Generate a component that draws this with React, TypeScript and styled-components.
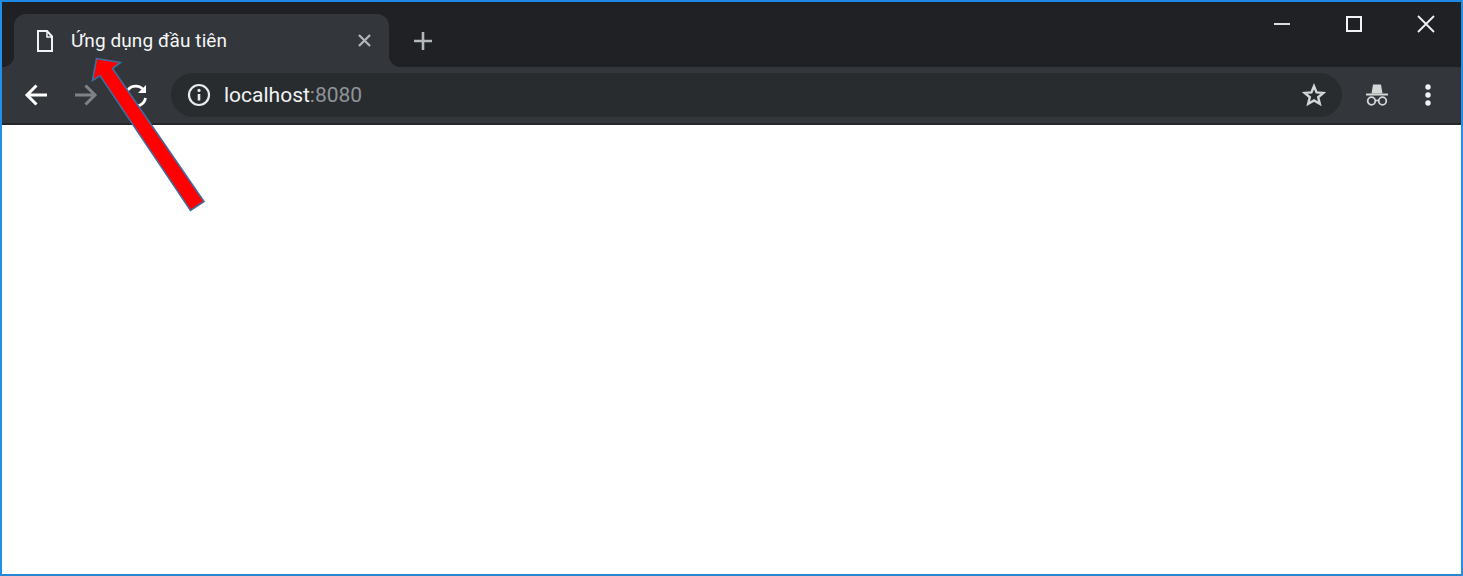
import styled, { createGlobalStyle } from 'styled-components';

const Global = createGlobalStyle`
  html, body {
    margin: 0;
    padding: 0;
    background: #fff;
  }
`;

const Frame = styled.div`
  position: relative;
  box-sizing: border-box;
  width: 1463px;
  height: 576px;
  border: 2px solid #2090ec;
  border-top-color: #1e88e5;
  border-bottom-color: #2a86d0;
  background: #fff;
  overflow: hidden;
  font-family: Roboto, 'Liberation Sans', sans-serif;
`;

const TabStrip = styled.div`
  display: flex;
  align-items: flex-end;
  height: 65px;
  padding-left: 12px;
  background: #1f2125;
`;

const Tab = styled.div`
  position: relative;
  box-sizing: border-box;
  display: flex;
  align-items: center;
  width: 375px;
  height: 53px;
  padding: 0 18px 0 21px;
  border-radius: 12px 12px 0 0;
  background: #33363a;
  color: #f6f7f8;

  &::before,
  &::after {
    content: '';
    position: absolute;
    bottom: 0;
    width: 12px;
    height: 12px;
  }

  &::before {
    left: -12px;
    background: radial-gradient(circle at 0 0, #1f2125 12px, #33363a 12.5px);
  }

  &::after {
    right: -12px;
    background: radial-gradient(circle at 100% 0, #1f2125 12px, #33363a 12.5px);
  }
`;

const TabTitle = styled.span`
  flex: 1;
  margin-left: 16px;
  margin-top: -1px;
  font-size: 19px;
  letter-spacing: 0.1px;
  white-space: nowrap;
`;

const NewTab = styled.div`
  display: flex;
  align-items: center;
  justify-content: center;
  width: 24px;
  height: 24px;
  margin: 0 0 14px 22px;
  color: #b4b7ba;
`;

const WindowControls = styled.div`
  display: flex;
  align-self: flex-start;
  gap: 54px;
  margin-left: auto;
  margin-right: 26px;
  padding-top: 11px;
`;

const Toolbar = styled.div`
  box-sizing: border-box;
  display: flex;
  align-items: center;
  height: 58px;
  padding: 0 20px;
  border-bottom: 2px solid #26272a;
  background: #33363a;
`;

const NavButton = styled.div<{ $dim?: boolean }>`
  display: flex;
  align-items: center;
  justify-content: center;
  width: 28px;
  height: 28px;
  margin-right: 22px;
  color: ${(p) => (p.$dim ? '#808285' : '#fff')};
`;

const Omnibox = styled.div`
  display: flex;
  flex: 1;
  align-items: center;
  height: 44px;
  margin-left: -1px;
  padding: 0 15px 0 16px;
  border-radius: 22px;
  background: #292c2f;
`;

const Url = styled.span`
  margin-left: 13px;
  font-size: 21px;
  color: #f1f3f4;
`;

const Port = styled.span`
  color: #8f9498;
`;

const ActionSlot = styled.div`
  display: flex;
  align-items: center;
  justify-content: center;
  width: 26px;
  height: 26px;
  color: #d4d6d8;
`;

const StarSlot = styled(ActionSlot)`
  margin-left: auto;
`;

const ToolbarActions = styled.div`
  display: flex;
  align-items: center;
  gap: 25px;
  margin-left: 22px;
`;

const Pointer = styled.svg`
  position: absolute;
  left: -2px;
  top: -2px;
  pointer-events: none;
`;

const Page = () => (
  <svg width="20" height="24" viewBox="0 0 20 24" fill="none" stroke="#f1f3f4" strokeWidth="2">
    <path d="M3 2h9l5 5.500V22H3z" />
    <path d="M12 2v6h5" strokeWidth="1.500" />
  </svg>
);

const CloseSmall = () => (
  <svg width="13" height="13" viewBox="0 0 14 14" stroke="#b4b7ba" strokeWidth="2.400" style={{ flexShrink: 0 }}>
    <path d="M1 1l12 12M13 1L1 13" />
  </svg>
);

const Plus = () => (
  <svg width="20" height="20" viewBox="0 0 20 20" stroke="currentColor" strokeWidth="2.600">
    <path d="M10 1v18M1 10h18" />
  </svg>
);

const Back = () => (
  <svg width="24" height="24" viewBox="0 0 24 24" fill="none" stroke="currentColor" strokeWidth="3">
    <path d="M23 12H3.500M12.500 2.500L3 12l9.500 9.500" />
  </svg>
);

const Forward = () => (
  <svg width="24" height="24" viewBox="0 0 24 24" fill="none" stroke="currentColor" strokeWidth="3">
    <path d="M1 12h19.500M11.500 2.500L21 12l-9.500 9.500" />
  </svg>
);

const Reload = () => (
  <svg width="24" height="24" viewBox="0 0 24 24" fill="none">
    <path d="M19.500 7A10 10 0 1 0 21.500 15" stroke="#fff" strokeWidth="2.800" />
    <path d="M22 2v8h-8z" fill="#fff" />
  </svg>
);

const Info = () => (
  <svg width="24" height="24" viewBox="0 0 24 24" fill="none">
    <circle cx="12" cy="12" r="10" stroke="#e8eaed" strokeWidth="2.200" />
    <path d="M12 11v6.500" stroke="#e8eaed" strokeWidth="2.600" />
    <circle cx="12" cy="7.400" r="1.600" fill="#e8eaed" />
  </svg>
);

const Star = () => (
  <svg width="24" height="24" viewBox="0 0 24 24" fill="none" stroke="currentColor" strokeWidth="2.400">
    <path d="M12 3.200l2.600 6.200 6.700.5-5.100 4.400 1.600 6.500L12 17.400l-5.800 3.400 1.600-6.500-5.100-4.400 6.700-.5z" />
  </svg>
);

const Incognito = () => (
  <svg width="24" height="24" viewBox="0 0 24 24" fill="none">
    <path d="M6.500 10.500L8 1.500h8l1.500 9z" fill="currentColor" />
    <path d="M1 11.500h22" stroke="currentColor" strokeWidth="2" />
    <circle cx="6.500" cy="18" r="3.800" stroke="currentColor" strokeWidth="1.800" />
    <circle cx="17.500" cy="18" r="3.800" stroke="currentColor" strokeWidth="1.800" />
    <path d="M10.300 17.500h3.400" stroke="currentColor" strokeWidth="1.600" />
  </svg>
);

const Kebab = () => (
  <svg width="8" height="24" viewBox="0 0 8 24" fill="#f1f3f4">
    <circle cx="4" cy="4" r="2.700" />
    <circle cx="4" cy="12" r="2.700" />
    <circle cx="4" cy="20" r="2.700" />
  </svg>
);

const Minimize = () => (
  <svg width="18" height="22" viewBox="0 0 18 22" stroke="#f1f3f4" strokeWidth="1.800">
    <path d="M1 11h16" />
  </svg>
);

const Maximize = () => (
  <svg width="18" height="22" viewBox="0 0 18 22" fill="none" stroke="#f1f3f4" strokeWidth="2">
    <path d="M2 4h14v14H2z" />
  </svg>
);

const CloseWindow = () => (
  <svg width="18" height="22" viewBox="0 0 18 22" stroke="#f1f3f4" strokeWidth="1.800">
    <path d="M1 3l16 16M17 3L1 19" />
  </svg>
);

export default function App() {
  return (
    <>
      <Global />
      <Frame>
        <TabStrip>
          <Tab>
            <Page />
            <TabTitle>Ứng dụng đầu tiên</TabTitle>
            <CloseSmall />
          </Tab>
          <NewTab>
            <Plus />
          </NewTab>
          <WindowControls>
            <Minimize />
            <Maximize />
            <CloseWindow />
          </WindowControls>
        </TabStrip>
        <Toolbar>
          <NavButton>
            <Back />
          </NavButton>
          <NavButton $dim>
            <Forward />
          </NavButton>
          <NavButton>
            <Reload />
          </NavButton>
          <Omnibox>
            <Info />
            <Url>
              localhost<Port>:8080</Port>
            </Url>
            <StarSlot>
              <Star />
            </StarSlot>
          </Omnibox>
          <ToolbarActions>
            <ActionSlot>
              <Incognito />
            </ActionSlot>
            <ActionSlot>
              <Kebab />
            </ActionSlot>
          </ToolbarActions>
        </Toolbar>
        <Pointer width="1463" height="576" viewBox="0 0 1463 576">
          <path
            d="M96.500 58.500L120.500 62.500 112.500 68.500 204 201.500 190.500 210.500 100 75.500 92.500 80.500z"
            fill="#ff0000"
            stroke="#3f6d9e"
            strokeWidth="1.600"
          />
        </Pointer>
      </Frame>
    </>
  );
}
